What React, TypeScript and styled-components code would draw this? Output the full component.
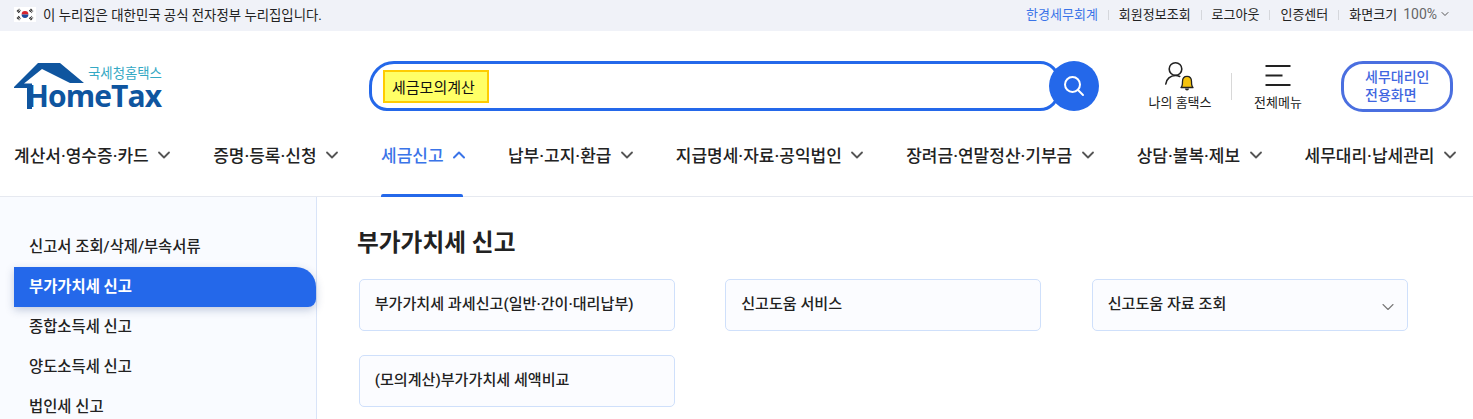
import React from "react";
import styled, { createGlobalStyle } from "styled-components";
import { ChevronDown, ChevronUp } from "lucide-react";

const BLUE = "#2468ea";

const GlobalStyle = createGlobalStyle`
  html, body {
    margin: 0;
    padding: 0;
    background: #fff;
  }
  body {
    font-family: Roboto, "Noto Sans CJK KR", "Noto Sans", sans-serif;
    color: #1e1e1e;
  }
`;

const Page = styled.div`
  width: 1473px;
  height: 419px;
  overflow: hidden;
`;

const TopBar = styled.div`
  height: 31px;
  background: #f0f2f8;
  display: flex;
  align-items: center;
  justify-content: space-between;
  padding: 0 22px 4px 14px;
  box-sizing: border-box;
`;

const Notice = styled.div`
  display: flex;
  align-items: center;
  gap: 7px;
  font-size: 13.4px;
  color: #222;
`;

const Flag = styled.svg`
  flex: none;
  margin-top: 2px;
`;

const TopLinks = styled.div`
  display: flex;
  align-items: center;
`;

const TopLink = styled.a<{ $accent?: boolean }>`
  color: ${(p) => (p.$accent ? "#3a74e8" : "#222")};
  font-size: 13px;
  &:not(:last-of-type)::after {
    content: "";
    display: inline-block;
    width: 1px;
    height: 10px;
    background: #d5d7dc;
    margin: 0 10px;
    vertical-align: -1px;
  }
`;

const Zoom = styled.span`
  display: flex;
  align-items: center;
  margin-left: 6px;
  gap: 2px;
  color: #666;
  font-size: 14px;
  svg {
    color: #555;
  }
`;

const Header = styled.header`
  height: 100px;
  display: flex;
  align-items: center;
  padding: 10px 20px 0 14px;
  box-sizing: border-box;
`;

const Logo = styled.div`
  position: relative;
  width: 150px;
  height: 46px;
  flex: none;
`;

const LogoSub = styled.span`
  position: absolute;
  left: 74px;
  top: 3px;
  font-size: 13.4px;
  line-height: 16px;
  color: #35a9c4;
`;

const LogoName = styled.span`
  position: absolute;
  left: 12px;
  top: 19px;
  font-family: "Open Sans", sans-serif;
  font-weight: 700;
  font-size: 30px;
  line-height: 28px;
  letter-spacing: -0.9px;
  color: #0f559f;
`;

const Search = styled.div`
  margin-left: 205px;
  display: flex;
  align-items: center;
  flex: none;
`;

const SearchBox = styled.div`
  width: 691px;
  height: 50px;
  box-sizing: border-box;
  border: 3px solid ${BLUE};
  border-radius: 25px 20px 20px 18px;
  display: flex;
  align-items: center;
  padding-left: 11px;
`;

const Keyword = styled.span`
  height: 33px;
  width: 106px;
  box-sizing: border-box;
  border: 2px solid #ffcc00;
  background: #ffff66;
  display: flex;
  align-items: center;
  padding-left: 7px;
  font-size: 15px;
  color: #111;
`;

const SearchButton = styled.button`
  width: 50px;
  height: 50px;
  margin-left: -11px;
  border: 0;
  padding: 0;
  border-radius: 50%;
  background: ${BLUE};
  display: flex;
  align-items: center;
  justify-content: center;
`;

const HeaderTools = styled.div`
  display: flex;
  align-items: center;
  margin-left: 48px;
`;

const Tool = styled.div`
  display: flex;
  flex-direction: column;
  align-items: center;
  gap: 3px;
  font-size: 13px;
  line-height: 18px;
  color: #222;
  width: 66px;
`;

const ToolDivider = styled.span`
  width: 1px;
  height: 27px;
  background: #d8d8d8;
  margin: 0 13px 0 18px;
`;

const AgentButton = styled.button`
  margin-left: 30px;
  width: 112px;
  height: 51px;
  box-sizing: border-box;
  border: 3px solid #4a6fe0;
  border-radius: 22px;
  background: #fff;
  color: #3f66e0;
  font-family: inherit;
  font-size: 14px;
  font-weight: 500;
  line-height: 18.5px;
  padding: 0 0 0 21px;
  text-align: left;
`;

const Nav = styled.nav`
  height: 66px;
  display: flex;
  gap: 38.9px;
  padding-left: 14px;
  border-bottom: 1px solid #e6e9f0;
  box-sizing: border-box;
`;

const NavItem = styled.a<{ $active?: boolean }>`
  position: relative;
  display: flex;
  align-items: flex-start;
  gap: 5.5px;
  padding-top: 13px;
  flex: none;
  font-size: 17px;
  line-height: 24px;
  font-weight: 500;
  color: ${(p) => (p.$active ? "#3a74e8" : "#222")};
  svg {
    margin-top: 1px;
    color: ${(p) => (p.$active ? "#3a74e8" : "#555")};
  }
  ${(p) =>
    p.$active &&
    `&::after {
      content: "";
      position: absolute;
      left: 0;
      right: 6px;
      bottom: -1px;
      height: 3px;
      border-radius: 2px 2px 0 0;
      background: ${BLUE};
    }`}
`;

const Body = styled.div`
  display: flex;
  height: 223px;
`;

const Sidebar = styled.aside`
  width: 317px;
  flex: none;
  box-sizing: border-box;
  background: #f9fbff;
  border-right: 1px solid #d9e4f8;
  padding: 30px 0 0 14px;
  display: flex;
  flex-direction: column;
`;

const SideItem = styled.a<{ $active?: boolean }>`
  flex: none;
  height: 40px;
  box-sizing: border-box;
  display: flex;
  align-items: center;
  padding: 0 0 5px 15px;
  font-size: 15.4px;
  font-weight: ${(p) => (p.$active ? 700 : 500)};
  color: ${(p) => (p.$active ? "#fff" : "#222")};
  background: ${(p) => (p.$active ? BLUE : "transparent")};
  border-radius: ${(p) => (p.$active ? "0 20px 8px 0" : "0")};
  box-shadow: ${(p) => (p.$active ? "0 3px 8px rgba(30, 60, 120, 0.25)" : "none")};
`;

const Main = styled.main`
  flex: 1;
  padding: 29px 0 0 40px;
`;

const Title = styled.h2`
  margin: 0 0 19px;
  font-size: 23.7px;
  line-height: 34px;
  font-weight: 700;
  color: #222;
`;

const CardGrid = styled.div`
  display: grid;
  grid-template-columns: repeat(3, 316px);
  column-gap: 50.5px;
  row-gap: 24px;
  margin-left: 1.7px;
`;

const Card = styled.a`
  height: 52px;
  box-sizing: border-box;
  border: 1px solid #cfe0fb;
  border-radius: 5px;
  background: #fbfcff;
  display: flex;
  align-items: center;
  justify-content: space-between;
  padding: 0 9px 6px 15px;
  font-size: 15.1px;
  font-weight: 500;
  color: #222;
  svg {
    margin-top: 9px;
    color: #777;
  }
`;

const navItems = [
  "계산서·영수증·카드",
  "증명·등록·신청",
  "세금신고",
  "납부·고지·환급",
  "지급명세·자료·공익법인",
  "장려금·연말정산·기부금",
  "상담·불복·제보",
  "세무대리·납세관리",
];

const sideItems = [
  "신고서 조회/삭제/부속서류",
  "부가가치세 신고",
  "종합소득세 신고",
  "양도소득세 신고",
  "법인세 신고",
];

function FlagIcon() {
  return (
    <Flag width="22" height="15" viewBox="0 0 22 15">
      <rect width="22" height="15" fill="#fff" />
      <path d="M7.6 7.5a3.4 3.4 0 0 1 6.8 0z" fill="#d5232f" />
      <path d="M7.6 7.5a3.4 3.4 0 0 0 6.8 0z" fill="#1d4a9c" />
      <g stroke="#333" strokeWidth="1.3" strokeDasharray="2.4 .6">
        <path d="M3 4.5l2.5-2.5M4.2 5.7l2.5-2.5" />
        <path d="M15.3 3.2l2.5 2.5M16.5 2l2.5 2.5" />
        <path d="M3 10.5l2.5 2.5M4.2 9.3l2.5 2.5" />
        <path d="M15.3 11.8l2.5-2.5M16.5 13l2.5-2.5" />
      </g>
    </Flag>
  );
}

function RoofIcon() {
  return (
    <svg width="72" height="46" viewBox="0 0 72 46" style={{ position: "absolute", left: 0, top: 0 }}>
      <path d="M0 24L24 0h22l24 20H56L28 6 10 20.5h8V46h-5V25H0z" fill="#0f559f" />
    </svg>
  );
}

function SearchIcon() {
  return (
    <svg width="24" height="24" viewBox="0 0 24 24" fill="none" stroke="#fff" strokeWidth="2" strokeLinecap="round">
      <circle cx="10.5" cy="10.5" r="7.5" />
      <path d="M16 16l5 5" />
    </svg>
  );
}

function UserBellIcon() {
  return (
    <svg width="30" height="30" viewBox="0 0 30 30" fill="none">
      <circle cx="10.5" cy="8" r="6.3" stroke="#222" strokeWidth="1.6" />
      <path d="M.8 23c.6-5 4.5-8.5 9.7-8.5 1.5 0 2.9.3 4.2.9" stroke="#222" strokeWidth="1.6" strokeLinecap="round" />
      <path
        d="M16 26.5c1.2-1 1.5-2.3 1.5-6 0-3 1.7-5.2 4.5-5.2s4.5 2.2 4.5 5.2c0 3.7.3 5 1.5 6z"
        fill="#f4c20d"
        stroke="#222"
        strokeWidth="1.3"
        strokeLinejoin="round"
      />
      <path d="M20 27.5a2 2 0 0 0 4 0z" fill="#222" />
    </svg>
  );
}

function MenuIcon() {
  return (
    <svg width="26" height="30" viewBox="0 0 26 30" stroke="#222" strokeWidth="2">
      <path d="M.5 5h25M.5 14.5h17M.5 24h25" />
    </svg>
  );
}

export default function App() {
  return (
    <Page>
      <GlobalStyle />
      <TopBar>
        <Notice>
          <FlagIcon />
          이 누리집은 대한민국 공식 전자정부 누리집입니다.
        </Notice>
        <TopLinks>
          <TopLink $accent>한경세무회계</TopLink>
          <TopLink>회원정보조회</TopLink>
          <TopLink>로그아웃</TopLink>
          <TopLink>인증센터</TopLink>
          <TopLink>화면크기</TopLink>
          <Zoom>
            100%
            <ChevronDown size={12} strokeWidth={2} />
          </Zoom>
        </TopLinks>
      </TopBar>
      <Header>
        <Logo>
          <RoofIcon />
          <LogoSub>국세청홈택스</LogoSub>
          <LogoName>HomeTax</LogoName>
        </Logo>
        <Search>
          <SearchBox>
            <Keyword>세금모의계산</Keyword>
          </SearchBox>
          <SearchButton>
            <SearchIcon />
          </SearchButton>
        </Search>
        <HeaderTools>
          <Tool>
            <UserBellIcon />
            나의 홈택스
          </Tool>
          <ToolDivider />
          <Tool>
            <MenuIcon />
            전체메뉴
          </Tool>
        </HeaderTools>
        <AgentButton>
          세무대리인
          <br />
          전용화면
        </AgentButton>
      </Header>
      <Nav>
        {navItems.map((label) => {
          const active = label === "세금신고";
          return (
            <NavItem key={label} $active={active}>
              {label}
              {active ? <ChevronUp size={20} strokeWidth={2.4} /> : <ChevronDown size={20} strokeWidth={2.2} />}
            </NavItem>
          );
        })}
      </Nav>
      <Body>
        <Sidebar>
          {sideItems.map((label) => (
            <SideItem key={label} $active={label === "부가가치세 신고"}>
              {label}
            </SideItem>
          ))}
        </Sidebar>
        <Main>
          <Title>부가가치세 신고</Title>
          <CardGrid>
            <Card>부가가치세 과세신고(일반·간이·대리납부)</Card>
            <Card>신고도움 서비스</Card>
            <Card>
              신고도움 자료 조회
              <ChevronDown size={20} strokeWidth={1.3} />
            </Card>
            <Card>(모의계산)부가가치세 세액비교</Card>
          </CardGrid>
        </Main>
      </Body>
    </Page>
  );
}
